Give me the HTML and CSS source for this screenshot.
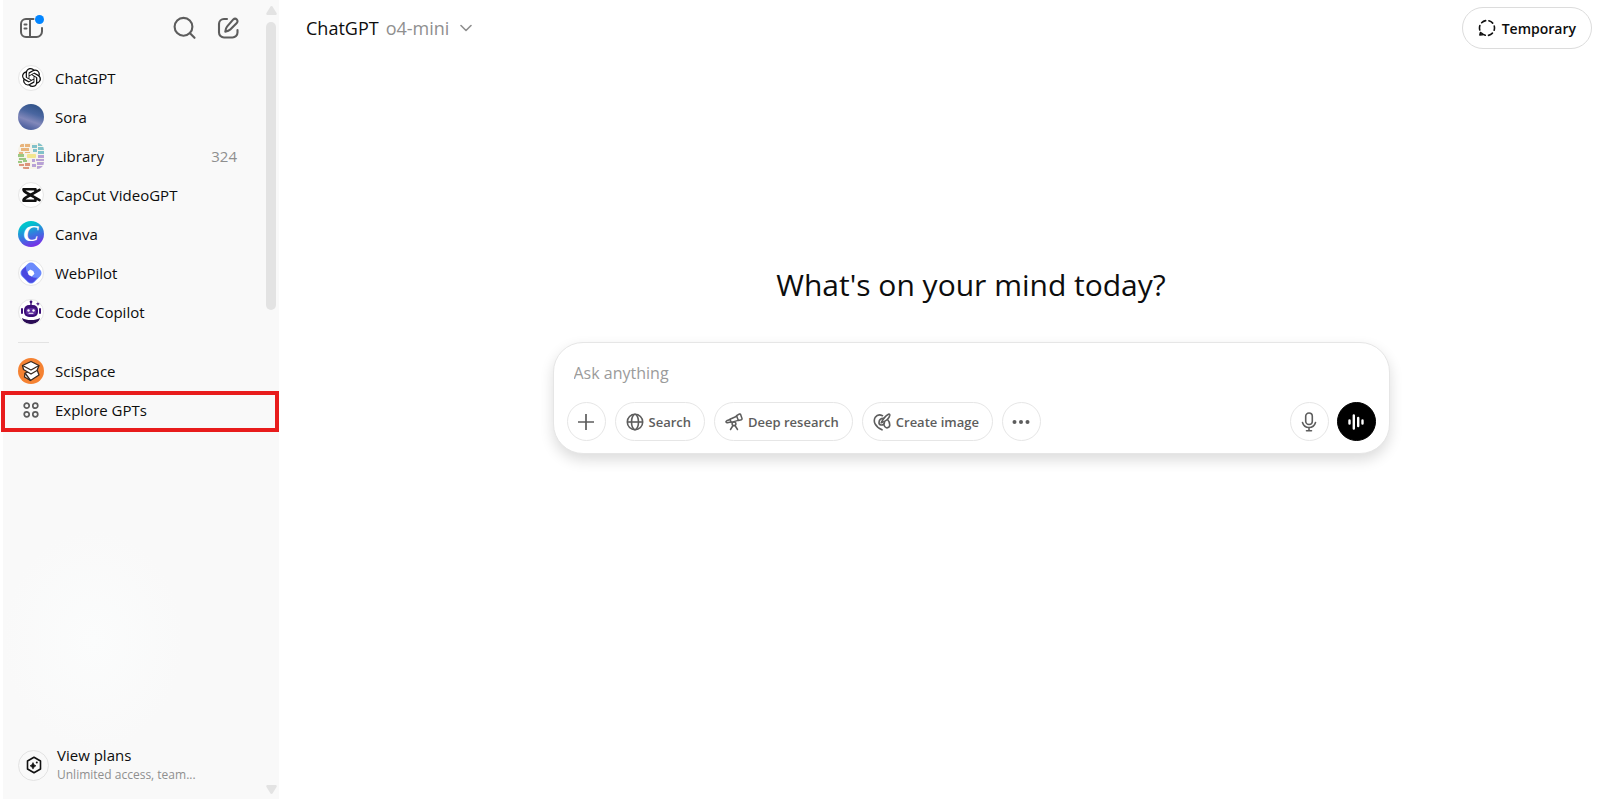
FILE: index.html
```
<!DOCTYPE html>
<html lang="en">
<head>
    <meta charset="UTF-8">
    <meta name="viewport" content="width=device-width, initial-scale=1.0">
    <title>ChatGPT</title>
    <link rel="stylesheet" href="styles.css">
</head>
<body>
    <div class="app">
        <aside class="sidebar">
            <div class="sidebar-content">
                <div class="sidebar-top">
                    <button type="button" class="icon-button panel-button" aria-label="Toggle sidebar">
                        <svg width="24" height="22" viewBox="0 0 24 22" fill="none" stroke="#5d5d5d" stroke-width="2" stroke-linecap="round">
                            <path d="M14.500 2H7a5 5 0 0 0-5 5v8a5 5 0 0 0 5 5h10.500a5.500 5.500 0 0 0 5.500-5.500V11" />
                            <path d="M11 2v18M5.500 7.500h2M5.500 11.500h2" />
                        </svg>
                        <span class="dot"></span>
                    </button>
                    <button type="button" class="icon-button" aria-label="Search chats">
                        <svg width="24" height="24" viewBox="0 0 24 24" fill="none" stroke="#5d5d5d" stroke-width="2.100" stroke-linecap="round">
                            <circle cx="11.500" cy="10.800" r="8.900" />
                            <path d="M18 17.300l4.500 4.500" />
                        </svg>
                    </button>
                    <button type="button" class="icon-button" aria-label="New chat">
                        <svg width="24" height="24" viewBox="0 0 24 24" fill="none" stroke="#5d5d5d" stroke-width="2.100" stroke-linecap="round" stroke-linejoin="round">
                            <path d="M11 3H8a5 5 0 0 0-5 5v8.500a5 5 0 0 0 5 5h8.500a5 5 0 0 0 5-5V14" />
                            <path d="M17.300 3.400a2.400 2.400 0 0 1 3.500 3.500l-6.500 6.700c-1.200 1.200-2.800 1.700-5 2 .3-2.200.7-3.900 1.900-5.200z" />
                        </svg>
                    </button>
                </div>

                <nav class="nav">
                    <a class="nav-item" href="#">
                        <span class="avatar bordered">
                            <svg width="19" height="19" viewBox="0 0 24 24" fill="#111"><path d="M22.2819 9.8211a5.9847 5.9847 0 0 0-.5157-4.9108 6.0462 6.0462 0 0 0-6.5098-2.9A6.0651 6.0651 0 0 0 4.9807 4.1818a5.9847 5.9847 0 0 0-3.9977 2.9 6.0462 6.0462 0 0 0 .7427 7.0966 5.98 5.98 0 0 0 .511 4.9107 6.051 6.051 0 0 0 6.5146 2.9001A5.9847 5.9847 0 0 0 13.2599 24a6.0557 6.0557 0 0 0 5.7718-4.2058 5.9894 5.9894 0 0 0 3.9977-2.9001 6.0557 6.0557 0 0 0-.7475-7.0729zm-9.022 12.6081a4.4755 4.4755 0 0 1-2.8764-1.0408l.1419-.0804 4.7783-2.7582a.7948.7948 0 0 0 .3927-.6813v-6.7369l2.02 1.1686a.071.071 0 0 1 .038.052v5.5826a4.504 4.504 0 0 1-4.4945 4.4944zm-9.6607-4.1254a4.4708 4.4708 0 0 1-.5346-3.0137l.142.0852 4.783 2.7582a.7712.7712 0 0 0 .7806 0l5.8428-3.3685v2.3324a.0804.0804 0 0 1-.0332.0615L9.74 19.9502a4.4992 4.4992 0 0 1-6.1408-1.6464zM2.3408 7.8956a4.485 4.485 0 0 1 2.3655-1.9728V11.6a.7664.7664 0 0 0 .3879.6765l5.8144 3.3543-2.0201 1.1685a.0757.0757 0 0 1-.071 0l-4.8303-2.7865A4.504 4.504 0 0 1 2.3408 7.872zm16.5963 3.8558L13.1038 8.364 15.1192 7.2a.0757.0757 0 0 1 .071 0l4.8303 2.7913a4.4944 4.4944 0 0 1-.6765 8.1042v-5.6772a.79.79 0 0 0-.407-.667zm2.0107-3.0231l-.142-.0852-4.7735-2.7818a.7759.7759 0 0 0-.7854 0L9.409 9.2297V6.8974a.0662.0662 0 0 1 .0284-.0615l4.8303-2.7866a4.4992 4.4992 0 0 1 6.6802 4.66zM8.3065 12.863l-2.02-1.1638a.0804.0804 0 0 1-.038-.0567V6.0742a4.4992 4.4992 0 0 1 7.3757-3.4537l-.142.0805L8.704 5.459a.7948.7948 0 0 0-.3927.6813zm1.0976-2.3654l2.602-1.4998 2.6069 1.4998v2.9994l-2.5974 1.4997-2.6067-1.4997Z" /></svg>
                        </span>
                        <span>ChatGPT</span>
                    </a>
                    <a class="nav-item" href="#">
                        <span class="avatar sora"></span>
                        <span>Sora</span>
                    </a>
                    <a class="nav-item" href="#">
                        <span class="avatar library">
                            <svg width="26" height="26" viewBox="0 0 26 26">
                                <g fill="#e8b47c"><path d="M2 1h4v3H2zM7 1h5v3H7zM3 5h8v3H3zM1 9h4v2H1zM7 9h5v1H7z" /></g>
                                <g fill="#9cc882"><path d="M0 11h6v3H0zM1 15h7v2H1zM0 18h4v2H0zM5 17h4v2H5z" /></g>
                                <g fill="#dc957c"><path d="M1 21h5v2H1zM7 20h5v3H7zM5 24h6v2H5z" /></g>
                                <g fill="#82c2ca"><path d="M14 2h5v3h-5zM20 0h5v3h-5zM20 4h6v3h-6zM15 6h4v3h-4zM20 8h6v3h-6z" /></g>
                                <g fill="#b8a2d6"><path d="M20 12h6v3h-6zM18 16h8v2h-8zM14 16h3v3h-3zM19 19h7v3h-7zM14 21h4v3h-4zM19 23h6v3h-6z" /></g>
                                <rect x="9" y="11" width="9" height="4" rx="1" fill="#f2e58e" />
                            </svg>
                        </span>
                        <span>Library</span>
                        <span class="count">324</span>
                    </a>
                    <a class="nav-item" href="#">
                        <span class="avatar bordered">
                            <svg width="20" height="16" viewBox="0 0 20 16" fill="none" stroke="#111" stroke-width="2.600" stroke-linejoin="round" stroke-linecap="round">
                                <path d="M18.500 2.800L5 10.500c-2 1-2.500 1.300-2.500 3.200h12v-2" />
                                <path d="M18.500 13.200L5 5.500c-2-1-2.500-1.300-2.500-3.200h12v2" />
                            </svg>
                        </span>
                        <span>CapCut VideoGPT</span>
                    </a>
                    <a class="nav-item" href="#">
                        <span class="avatar canva">C</span>
                        <span>Canva</span>
                    </a>
                    <a class="nav-item" href="#">
                        <span class="avatar bordered">
                            <svg width="22" height="22" viewBox="0 0 22 22">
                                <path d="M11 5L17 11L11 17L5 11Z" fill="#6b8afc" stroke="#6b8afc" stroke-width="9" stroke-linejoin="round" />
                                <path d="M1.500 9.500Q2 7 6 4.500C5.500 11 11 17 17.500 15.500L14 19.500q-3 2.500-6 0L2.500 14q-1.500-2-1-4.500z" fill="#4a48e0" />
                                <circle cx="11" cy="11" r="2.800" fill="#fff" />
                                <path d="M7.500 10l3-2.500 4 4-3 3z" fill="#fff" />
                            </svg>
                        </span>
                        <span>WebPilot</span>
                    </a>
                    <a class="nav-item" href="#">
                        <span class="avatar bordered">
                            <svg width="22" height="24" viewBox="0 0 22 24" fill="#3c0f78">
                                <path d="M10.300 2h1.400v4h-1.400z" />
                                <circle cx="11" cy="1.800" r="1.400" />
                                <rect x="4" y="5" width="14" height="12" rx="5" />
                                <rect x="1" y="8" width="2" height="6" rx="1" />
                                <rect x="19" y="8" width="2" height="6" rx="1" />
                                <path d="M18 1.500l.6 1.700 1.700.6-1.700.6-.6 1.700-.6-1.700-1.700-.6 1.700-.6z" />
                                <path d="M2 18c3 1.500 5 2 9 2s6-.5 9-2c-1 4-5 6-9 6s-8-2-9-6z" fill="#2a0b55" />
                                <rect x="6" y="8" width="10" height="7" rx="3" fill="#5d2c9e" />
                                <circle cx="8.500" cy="10.500" r="1.200" fill="#fff" />
                                <circle cx="13.500" cy="10.500" r="1.200" fill="#fff" />
                                <path d="M9 13.300h4" stroke="#fff" stroke-linecap="round" />
                            </svg>
                        </span>
                        <span>Code Copilot</span>
                    </a>
                    <hr class="separator">
                    <a class="nav-item" href="#">
                        <span class="avatar scispace">
                            <svg width="22" height="22" viewBox="0 0 22 22" fill="#fff" stroke="#3a2a20" stroke-width="1.300" stroke-linejoin="round">
                                <path d="M5 13L17 9.500l2 5.500-8.500 5.500L4.500 17z" />
                                <path d="M2.500 5.500L11 1.500l8 4-2 5L11 14 3.500 9.500z" />
                                <path d="M2.500 5.500L11 10l8-4.500M5 13l5.500 7.500" fill="none" />
                            </svg>
                        </span>
                        <span>SciSpace</span>
                    </a>
                    <a class="nav-item highlighted" href="#">
                        <span class="avatar">
                            <svg width="16" height="16" viewBox="0 0 16 16" fill="none" stroke="#5d5d5d" stroke-width="1.700">
                                <circle cx="3.700" cy="3.700" r="2.500" />
                                <circle cx="12.300" cy="3.700" r="2.500" />
                                <circle cx="3.700" cy="12.300" r="2.500" />
                                <circle cx="12.300" cy="12.300" r="2.500" />
                            </svg>
                        </span>
                        <span>Explore GPTs</span>
                    </a>
                </nav>

                <a class="plans" href="#">
                    <span class="plans-icon">
                        <svg width="16" height="18" viewBox="0 0 16 18" fill="none" stroke="#111" stroke-width="1.600" stroke-linejoin="round">
                            <path d="M8 1.200L14.500 5v8L8 16.800 1.500 13V5z" />
                            <path d="M7 6.500q.6 2.600 3 3.300-2.400.7-3 3.300-.6-2.600-3-3.300 2.400-.7 3-3.300z" fill="#111" stroke-width=".6" />
                            <circle cx="10.800" cy="6.500" r="1" fill="#111" stroke="none" />
                        </svg>
                    </span>
                    <span class="plans-text">
                        <span class="plans-title">View plans</span>
                        <span class="plans-note">Unlimited access, team...</span>
                    </span>
                </a>
            </div>
            <div class="scroll-rail">
                <svg width="11" height="9" viewBox="0 0 11 9" fill="#e3e3e3"><path d="M5.500 0q.7 0 1.200.8L10.500 7q.8 2-1 2h-8q-1.800 0-1-2L4.300.8Q4.800 0 5.500 0z" /></svg>
                <span class="scroll-thumb"></span>
                <svg class="scroll-down" width="11" height="9" viewBox="0 0 11 9" fill="#e3e3e3"><path d="M5.500 9q-.7 0-1.200-.8L.5 2q-.8-2 1-2h8q1.800 0 1 2L6.700 8.200q-.5.8-1.200.8z" /></svg>
            </div>
        </aside>

        <main class="main">
            <header class="header">
                <button type="button" class="model-button">
                    <span>ChatGPT</span>
                    <span class="model">o4-mini</span>
                    <svg width="12" height="8" viewBox="0 0 12 8" fill="none" stroke="#8f8f8f" stroke-width="1.600" stroke-linecap="round" stroke-linejoin="round"><path d="M1 1.500l5 5 5-5" /></svg>
                </button>
                <button type="button" class="temporary-button">
                    <svg width="18" height="18" viewBox="0 0 18 18" fill="none" stroke="#111" stroke-width="1.600" stroke-linecap="round">
                        <circle cx="9" cy="9" r="7.500" stroke-dasharray="4.500 3.350" stroke-dashoffset="2.200" />
                        <path d="M2.500 13.500l-.6 2.500 2.500-.2" stroke-linejoin="round" />
                    </svg>
                    <span>Temporary</span>
                </button>
            </header>

            <section class="stage">
                <h1>What's on your mind today?</h1>
                <form class="composer">
                    <input type="text" class="prompt" aria-label="Ask anything" placeholder="Ask anything">
                    <div class="tools">
                        <button type="button" class="tool round" aria-label="Add">
                            <svg width="18" height="18" viewBox="0 0 18 18" fill="none" stroke="#5d5d5d" stroke-width="1.700"><path d="M9 1v16M1 9h16" /></svg>
                        </button>
                        <button type="button" class="tool">
                            <svg width="18" height="18" viewBox="0 0 18 18" fill="none" stroke="#5d5d5d" stroke-width="1.600">
                                <circle cx="9" cy="9" r="7.700" />
                                <ellipse cx="9" cy="9" rx="3.500" ry="7.700" />
                                <path d="M1.500 9h15" />
                            </svg>
                            <span>Search</span>
                        </button>
                        <button type="button" class="tool">
                            <svg width="18" height="18" viewBox="0 0 18 18" fill="none" stroke="#5d5d5d" stroke-width="1.500" stroke-linejoin="round" stroke-linecap="round">
                                <path d="M11.500 2.700L14.500 1q.8-.3 1.100.4l1.400 4.200q.2.800-.6 1.100l-3 .8z" />
                                <path d="M11.700 3.200L5 6.200l1.200 3.200 7-2" />
                                <path d="M5 6.500L1.700 7.800q-1 .5-.6 1.300t1.200.7L6 9" />
                                <circle cx="9" cy="10.800" r="1.900" />
                                <path d="M8 12.500L5.500 16.500M10 12.500l2.500 4" />
                            </svg>
                            <span>Deep research</span>
                        </button>
                        <button type="button" class="tool">
                            <svg width="18" height="18" viewBox="0 0 18 18" fill="none" stroke="#5d5d5d" stroke-width="1.600" stroke-linejoin="round" stroke-linecap="round">
                                <path d="M9.500 2.700Q5 .5 2.300 4.200C-.2 8.500 2 13.500 9 16.800" />
                                <path d="M10.500 5.400Q6.500 5.300 6 9.300q-.2 2.500 2 2.700 3 .2 3.500-2.500" />
                                <path d="M8.200 9.800Q11 3.500 15.500 1.200q1.500-.5 1.300 1.200-1 5-8.600 7.400z" />
                                <path d="M14.500 6.500Q17 9 16.800 12.200q-.5 3-3.500 2.600-1.800-.5-2.300-3" />
                            </svg>
                            <span>Create image</span>
                        </button>
                        <button type="button" class="tool round" aria-label="More tools">
                            <svg width="18" height="18" viewBox="0 0 18 18" fill="#5d5d5d"><circle cx="2.500" cy="9" r="2" /><circle cx="9" cy="9" r="2" /><circle cx="15.500" cy="9" r="2" /></svg>
                        </button>
                        <div class="tools-end">
                            <button type="button" class="tool round" aria-label="Dictate">
                                <svg width="16" height="20" viewBox="0 0 16 20" fill="none" stroke="#5d5d5d" stroke-width="1.600" stroke-linecap="round">
                                    <rect x="4.700" y="1" width="6.600" height="11.500" rx="3.300" />
                                    <path d="M1.500 10.500Q3 15.500 8 15.500t6.500-5M8 15.500v3M5.500 18.700h5" />
                                </svg>
                            </button>
                            <button type="submit" class="tool round voice" aria-label="Voice mode">
                                <svg width="18" height="18" viewBox="0 0 18 18" stroke="#fff" stroke-width="2.400" stroke-linecap="round"><path d="M2.500 7.500v3M6.800 2.500v13M11.200 5v8M15.500 7.500v3" /></svg>
                            </button>
                        </div>
                    </div>
                </form>
            </section>
        </main>
    </div>
</body>
</html>
```
FILE: styles.css
```
* {
    box-sizing: border-box;
}
body {
    margin: 0;
    font-family: "Segoe UI", "Open Sans", sans-serif;
    color: #0d0d0d;
    background: #fff;
}
a {
    color: inherit;
    text-decoration: none;
}
button {
    font-family: inherit;
    color: inherit;
    background: none;
    border: none;
    padding: 0;
    cursor: pointer;
}
svg {
    display: block;
    flex-shrink: 0;
}
.app {
    display: flex;
    min-height: 100vh;
    padding-left: 3px;
}

/* Sidebar */
.sidebar {
    display: flex;
    flex: 0 0 276px;
    background: radial-gradient(ellipse 90px 110px at 90px 640px, #fbfcfc, #f9f9f9);
}
.sidebar-content {
    display: flex;
    flex-direction: column;
    flex: 1;
}
.sidebar-top {
    display: flex;
    align-items: center;
    gap: 20px;
    height: 56px;
    padding: 0 26px 0 16px;
}
.icon-button {
    position: relative;
}
.panel-button {
    margin-right: auto;
}
.dot {
    position: absolute;
    top: -2px;
    right: -1px;
    width: 9px;
    height: 9px;
    border-radius: 50%;
    background: #0285ff;
}
.nav {
    padding-top: 2px;
}
.nav-item {
    position: relative;
    display: flex;
    align-items: center;
    gap: 11px;
    height: 39px;
    padding: 0 29px 0 15px;
    font-size: 15px;
}
.avatar {
    display: flex;
    align-items: center;
    justify-content: center;
    width: 26px;
    height: 26px;
    border-radius: 50%;
    overflow: hidden;
}
.bordered {
    background: #fff;
    border: 1px solid #e6e6e6;
}
.sora {
    background: linear-gradient(200deg, #35568c 15%, #4a66a0 38%, #8288ba 62%, #5a6aa6 80%, #3a5590);
}
.library {
    border-radius: 7px;
    background: #f6f3ea;
}
.canva {
    background: linear-gradient(160deg, #00c4cc 20%, #3a74e0 55%, #7d2ae8 90%);
    color: #fff;
    font: italic bold 23px/26px "Liberation Serif", serif;
}
.scispace {
    background: #f58232;
}
.count {
    margin-left: auto;
    color: #8f8f8f;
}
.separator {
    width: 31px;
    height: 1px;
    margin: 11px 15px 8px;
    border: none;
    background: #e3e3e3;
}
.highlighted::after {
    content: "";
    position: absolute;
    inset: 1px -13px -3px -2px;
    border: 4px solid #e81c1c;
}
.plans {
    display: flex;
    align-items: center;
    gap: 8px;
    margin-top: auto;
    padding: 0 15px 14px;
}
.plans-icon {
    display: flex;
    align-items: center;
    justify-content: center;
    width: 31px;
    height: 31px;
    border: 1px solid #e3e3e3;
    border-radius: 50%;
}
.plans-title,
.plans-note {
    display: block;
    line-height: 20px;
}
.plans-title {
    font-size: 15px;
}
.plans-note {
    font-size: 12px;
    color: #8f8f8f;
}
.scroll-rail {
    display: flex;
    flex-direction: column;
    gap: 7px;
    width: 13px;
    padding: 6px 0 5px;
}
.scroll-thumb {
    width: 10px;
    height: 288px;
    border-radius: 5px;
    background: #e3e3e3;
}
.scroll-down {
    margin-top: auto;
}

/* Main area */
.main {
    display: flex;
    flex-direction: column;
    flex: 1;
}
.header {
    display: flex;
    align-items: center;
    justify-content: space-between;
    height: 56px;
    padding: 0 8px 0 27px;
}
.model-button {
    display: flex;
    align-items: center;
    gap: 7px;
    font-size: 18px;
}
.model {
    margin-right: 4px;
    color: #8f8f8f;
}
.temporary-button {
    display: flex;
    align-items: center;
    gap: 6px;
    height: 42px;
    padding: 0 15px;
    border: 1px solid #dcdcdc;
    border-radius: 21px;
    font-size: 14px;
    font-weight: 600;
}
.stage {
    display: flex;
    flex-direction: column;
    align-items: center;
    justify-content: center;
    flex: 1;
    padding: 0 20px 136px 83px;
}
h1 {
    margin: 0 0 37px;
    font-size: 30px;
    line-height: 40px;
    font-weight: 400;
}
.composer {
    width: 100%;
    max-width: 837px;
    padding: 18px 13px 12px;
    border: 1px solid #e6e6e6;
    border-radius: 30px;
    background: #fff;
    box-shadow: 0 6px 14px rgba(0, 0, 0, 0.14);
}
.prompt {
    display: block;
    width: 100%;
    height: 24px;
    margin-bottom: 17px;
    padding: 0 7px;
    border: none;
    outline: none;
    font-family: inherit;
    font-size: 16px;
}
.prompt::placeholder {
    color: #9b9b9b;
}
.tools {
    display: flex;
    align-items: center;
    gap: 9px;
}
.tools-end {
    display: flex;
    gap: 8px;
    margin-left: auto;
}
.tool {
    display: flex;
    align-items: center;
    justify-content: center;
    gap: 5px;
    height: 39px;
    padding: 0 13px 0 10px;
    border: 1px solid #e6e6e6;
    border-radius: 20px;
    font-size: 13px;
    font-weight: 600;
    color: #5d5d5d;
}
.round {
    width: 39px;
    padding: 0;
}
.voice {
    background: #000;
    border-color: #000;
}
```
